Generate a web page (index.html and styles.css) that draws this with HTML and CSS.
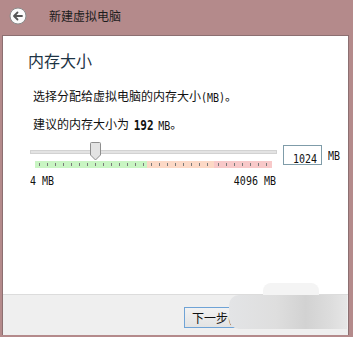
FILE: index.html
```html
<!DOCTYPE html>
<html>
<head>
<meta charset="utf-8">
<link rel="stylesheet" href="styles.css">
</head>
<body>
<div class="window">
  <div class="titlebar">
    <span class="back">
      <svg width="18" height="18" viewBox="0 0 18 18">
        <circle cx="9" cy="9" r="8" fill="#fbfbfb" stroke="#8a8a8a" stroke-width="1"/>
        <path d="M13 9H5.5M8.5 5.5L5 9l3.5 3.5" fill="none" stroke="#555" stroke-width="1.8" stroke-linecap="round" stroke-linejoin="round"/>
      </svg>
    </span>
    <span class="title">新建虚拟电脑</span>
  </div>
  <div class="panel">
    <div class="content">
      <h1 class="heading">内存大小</h1>
      <p class="line">选择分配给虚拟电脑的内存大小<span class="mono">(MB)</span>。</p>
      <p class="line line2">建议的内存大小为 <b class="mono">192</b> <span class="mono">MB</span>。</p>
      <div class="slider-row">
        <div class="slider">
          <div class="track"></div>
          <div class="thumb">
            <svg width="11" height="19" viewBox="0 0 11 19">
              <path d="M0.5 1.5Q0.5 0.5 1.5 0.5H9.5Q10.5 0.5 10.5 1.5V13L5.5 18L0.5 13Z" fill="#e3e3e3" stroke="#8e8e8e"/>
            </svg>
          </div>
          <div class="scale">
            <div class="seg green"></div>
            <div class="seg orange"></div>
            <div class="seg red"></div>
          </div>
          <div class="labels">
            <span class="mono">4 MB</span>
            <span class="mono">4096 MB</span>
          </div>
        </div>
        <div class="value">
          <span class="input"><span class="mono">1024</span></span>
          <span class="unit mono">MB</span>
        </div>
      </div>
    </div>
    <div class="footer">
      <span class="button">下一步(N)</span>
    </div>
    <div class="watermark">
      <div class="wm-top"></div>
      <div class="wm-body"></div>
    </div>
  </div>
</div>
</body>
</html>
```
FILE: styles.css
```css
* { box-sizing: border-box; }
html, body { margin: 0; padding: 0; }
body {
  width: 353px;
  height: 337px;
  background: #b48a8b;
  font-family: "Noto Sans CJK SC", "Noto Sans", sans-serif;
  overflow: hidden;
}
.window {
  display: flex;
  flex-direction: column;
  height: 337px;
}
.titlebar {
  height: 35px;
  display: flex;
  align-items: center;
  padding-left: 9px;
  padding-bottom: 3px;
}
.back { display: flex; width: 18px; height: 18px; }
.title {
  margin-left: 22px;
  font-size: 12px;
  color: #1c1c1c;
  line-height: 16px;
}
.panel {
  position: relative;
  margin-left: 2px;
  width: 347px;
  height: 300px;
  border: 1px solid #8c6f71;
  border-bottom: none;
  display: flex;
  flex-direction: column;
  background: #fff;
}
.content {
  flex: 1;
  padding: 14px 0 0 25px;
}
.heading {
  margin: 0;
  font-weight: normal;
  font-size: 16px;
  line-height: 20px;
  color: #1d3344;
}
.line {
  margin: 18px 0 0 5px;
  font-size: 12px;
  line-height: 16px;
  color: #111;
}
.line2 { margin-top: 10px; }
.mono {
  display: inline-block;
  font-family: "DejaVu Sans Mono", "Liberation Mono", monospace;
  font-size: 10px;
  transform: scaleY(1.25);
}
.line b.mono { font-weight: bold; font-size: 11px; margin: 0 2px; }
.slider-row {
  margin-top: 8px;
  display: flex;
  align-items: flex-start;
}
.slider {
  position: relative;
  width: 247px;
  margin-left: 2px;
  padding-top: 8px;
}
.track {
  height: 4px;
  background: #e3e3e3;
  border: 1px solid #d2d2d2;
}
.thumb {
  position: absolute;
  left: 60px;
  top: 0;
  display: flex;
}
.scale {
  margin: 7px 5px 0 5px;
  height: 7px;
  display: flex;
}
.seg {
  height: 7px;
  background-image: linear-gradient(to right, #7a7a7a 1px, transparent 1px);
  background-size: 8px 3px;
  background-repeat: repeat-x;
  background-position: 4px 2px;
}
.green { width: 112px; background-color: #c9f5c3; }
.orange { width: 67px; background-color: #fcd9c6; }
.red { width: 58px; background-color: #f8c9c9; }
.labels {
  margin-top: 6px;
  display: flex;
  justify-content: space-between;
  line-height: 14px;
  color: #111;
  padding-right: 1px;
}
.value {
  margin-left: 6px;
  margin-top: 3px;
  display: flex;
  align-items: center;
}
.input {
  width: 39px;
  height: 20px;
  border: 1px solid #7f9ca9;
  line-height: 18px;
  text-align: right;
  padding-right: 4px;
  color: #111;
}
.unit {
  margin-left: 6px;
  color: #111;
}
.footer {
  height: 41px;
  border-top: 1px solid #dcdcdc;
  background: #efefef;
  padding: 9px 0 0 181px;
}
.button {
  display: inline-block;
  width: 76px;
  height: 21px;
  border: 1px solid #6fa3d6;
  background: linear-gradient(#f2f2f2, #e3e3e3);
  font-size: 12px;
  line-height: 19px;
  padding-left: 7px;
  color: #111;
}
.watermark {
  position: absolute;
  left: 226px;
  top: 247px;
  width: 118px;
  height: 48px;
}
.wm-top {
  position: absolute;
  left: 34px;
  top: 0;
  width: 56px;
  height: 16px;
  border-radius: 8px 8px 0 0;
  background: #f4f4f4;
}
.wm-body {
  position: absolute;
  left: 0;
  top: 12px;
  width: 118px;
  height: 34px;
  border-radius: 10px 0 0 10px;
  background: linear-gradient(to right, #e3e4e6 0%, #dedede 40%, #d2d2d2 65%, #dcdcdc 85%, #e6e6e6 100%);
}
```
